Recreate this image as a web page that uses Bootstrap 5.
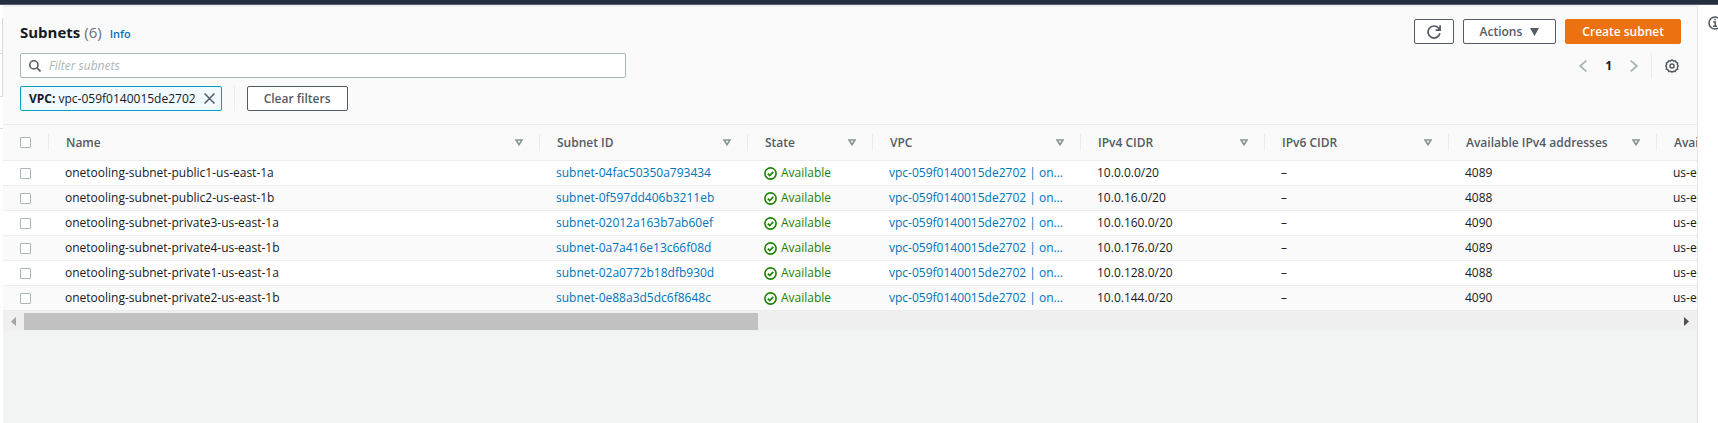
<!DOCTYPE html>
<html lang="en">
<head>
<meta charset="utf-8">
<meta name="viewport" content="width=device-width, initial-scale=1">
<title>Subnets | VPC Console</title>
<link href="https://cdn.jsdelivr.net/npm/bootstrap@5.3.0/dist/css/bootstrap.min.css" rel="stylesheet">
<style>
  body { font-family: "Open Sans", sans-serif; font-size: 12px; line-height: 16px; color: #16191f; background: #f2f3f3; }
  a { color: #0073bb; text-decoration: none; }
  .topbar { height: 5px; background: #232f3e; border-bottom: 1px solid #545b64; }
  .nav-edge { width: 3px; background: #fff; }
  .nav-edge div { border-right: 1px solid #d5dbdb; border-bottom: 1px solid #d5dbdb; }
  .edge-a { height: 36px; margin-top: 13px; }
  .edge-b { height: 43px; }
  .edge-c { height: 32px; border-right: 0 !important; }
  .panel { min-width: 0; border-right: 1px solid #e3e6e6; border-top: 1px solid #eaeded; margin-top: 1px; }
  .tools { background: #fafafa; }
  .panel-head { padding: 12px 16px 13px 17px; border-bottom: 1px solid #eaeded; }
  .info-rail { width: 20px; background: #fff; padding: 9px 0 0 10px; overflow: hidden; }
  .title-row { height: 25px; }
  .search-row { margin-top: 9px; }
  .btn-row { gap: 9px; }
  h1 { font-size: 15px; line-height: 24px; }
  .count { color: #687078; font-weight: 400; }
  .info-link { font-size: 11px; font-weight: 600; }
  .console-btn { height: 25px; padding: 0 16px; font-size: 12px; line-height: 16px; font-weight: 600; color: #545b64; background: #fff; border: 1px solid #545b64; border-radius: 2px; }
  .console-btn.icon-only { padding: 0 12px; }
  .console-btn.primary { color: #fff; background: #ec7211; border-color: #ec7211; }
  .search-box { max-width: 606px; height: 25px; border: 1px solid #aab7b8; border-radius: 2px; background: #fff; padding: 0 8px; }
  .search-box input { font-size: 12px; line-height: 16px; color: #16191f; }
  .search-box input::placeholder { color: #aab7b8; font-style: italic; opacity: 1; }
  .token { height: 25px; padding: 0 6px 0 8px; border: 1px solid #00a1c9; border-radius: 2px; background: #f1faff; }
  .bare { border: 0; background: none; padding: 0; display: flex; }
  .sep { width: 1px; height: 25px; background: #eaeded; }
  .filters { gap: 12px; }
  .pager { gap: 13px; padding-right: 2px; }
  .pages { gap: 18px; }
  .table-view { overflow: hidden; }
  .subnet-table { table-layout: fixed; width: 1760px; border-collapse: separate; border-spacing: 0; }
  .subnet-table th, .subnet-table td { border-bottom: 1px solid #eaeded; white-space: nowrap; overflow: hidden; }
  .subnet-table th { height: 36px; padding: 0; background: #fafafa; color: #545b64; font-weight: 600; }
  .subnet-table td { height: 25px; padding: 0 0 0 16px; background: #fff; }
  .subnet-table tr:nth-child(even) td { background: #fafafa; }
  .subnet-table .pick { padding: 0 0 0 17px; }
  .head-cell { height: 17px; padding: 0 16px 0 17px; }
  .divided { border-right: 1px solid #eaeded; }
  .w-pick { width: 46px; } .w-name { width: 491px; } .w-m { width: 208px; } .w-s { width: 125px; } .w-c { width: 184px; }
  .form-check-input { width: 11px; height: 11px; margin: 0; border: 1px solid #aab7b8; display: block; }
  .form-check-input[type=checkbox] { border-radius: 1px; }
  .ok { color: #1d8102; }
  .scroll-track { height: 20px; background: #f0f0f0; padding: 0 8px; }
  .scroll-thumb { width: 734px; height: 17px; background: #c1c1c1; }
</style>
</head>
<body class="d-flex flex-column min-vh-100">
<svg width="0" height="0" class="position-absolute" aria-hidden="true">
  <symbol id="okay" viewBox="0 0 13 13"><circle cx="6.500" cy="6.500" r="5.600" fill="none" stroke="#1d8102" stroke-width="1.600"/><path d="M3.800 6.600l1.900 1.900 3.600-3.600" fill="none" stroke="#1d8102" stroke-width="1.600"/></symbol>
  <symbol id="filter" viewBox="0 0 8 7"><path d="M1 1h6L4 5.600z" fill="none" stroke="#879596" stroke-width="1.700"/></symbol>
</svg>
<header class="topbar"></header>
<div class="d-flex flex-grow-1">
  <div class="nav-edge flex-shrink-0"><div class="edge-a"></div><div class="edge-b"></div><div class="edge-c"></div></div>
  <main class="panel flex-grow-1">
    <div class="tools panel-head d-flex flex-column">
      <div class="title-row d-flex align-items-center justify-content-between">
        <div class="d-flex align-items-baseline gap-2">
          <h1 class="m-0 fw-bold">Subnets <span class="count">(6)</span></h1>
          <a href="#" class="info-link">Info</a>
        </div>
        <div class="btn-row d-flex">
          <button class="console-btn icon-only d-flex align-items-center" type="button" aria-label="Refresh"><svg width="14" height="14" viewBox="0 0 14 14" fill="none" stroke="#545b64" stroke-width="1.700"><path d="M12.900 8.300A6 6 0 1 1 11.500 3L13 5M13.100 .3v4.900H8.600"/></svg></button>
          <button class="console-btn d-flex align-items-center gap-2" type="button">Actions <svg width="9" height="8" viewBox="0 0 9 8"><path d="M0 0h9L4.500 8z" fill="#545b64"/></svg></button>
          <button class="console-btn primary" type="button">Create subnet</button>
        </div>
      </div>
      <div class="search-row d-flex align-items-center justify-content-between">
        <div class="search-box flex-grow-1 d-flex align-items-center gap-2">
          <svg width="12" height="12" viewBox="0 0 12 12" fill="none" stroke="#545b64" stroke-width="1.600"><circle cx="4.900" cy="4.900" r="4.100"/><path d="M7.800 7.800l3.700 3.700"/></svg>
          <input class="border-0 bg-transparent p-0 flex-grow-1" type="text" placeholder="Filter subnets" aria-label="Filter subnets">
        </div>
        <div class="pager d-flex align-items-center">
          <div class="pages d-flex align-items-center">
            <button class="bare" type="button" aria-label="Previous page"><svg width="8" height="12" viewBox="0 0 8 12" fill="none" stroke="#aab7b8" stroke-width="1.800"><path d="M7.300 .6L1.200 6l6.100 5.400"/></svg></button>
            <b>1</b>
            <button class="bare" type="button" aria-label="Next page"><svg width="8" height="12" viewBox="0 0 8 12" fill="none" stroke="#aab7b8" stroke-width="1.800"><path d="M.7 .6L6.800 6 .7 11.400"/></svg></button>
          </div>
          <span class="sep"></span>
          <button class="bare" type="button" aria-label="Preferences"><svg width="14" height="14" viewBox="0 0 14 14" fill="none" stroke="#545b64" stroke-width="1.500"><path d="M5.600 1.900L7 .9l1.400 1 1.800-.2.800 1.500 1.600.8-.2 1.700L13.200 7l-.8 1.400.2 1.700-1.600.8-.8 1.500-1.800-.2L7 13.100l-1.400-.9-1.800.2-.8-1.500-1.600-.8.200-1.700L.8 7l.8-1.300L1.400 4 3 3.200l.8-1.500z"/><circle cx="7" cy="7" r="2"/></svg></button>
        </div>
      </div>
      <div class="filters d-flex align-items-center mt-2">
        <span class="token d-flex align-items-center gap-2"><span><b>VPC:</b> vpc-059f0140015de2702</span><button class="bare" type="button" aria-label="Remove filter"><svg width="11" height="11" viewBox="0 0 12 12" stroke="#545b64" stroke-width="1.700"><path d="M.6.600l10.800 10.800M11.400.6L.6 11.400"/></svg></button></span>
        <span class="sep"></span>
        <button class="console-btn" type="button">Clear filters</button>
      </div>
    </div>
    <div class="table-view">
      <table class="subnet-table" id="subnets">
        <colgroup><col class="w-pick"><col class="w-name"><col class="w-m"><col class="w-s"><col class="w-m"><col class="w-c"><col class="w-c"><col class="w-m"><col></colgroup>
        <thead><tr><th><div class="head-cell d-flex align-items-center divided"><input class="form-check-input" type="checkbox" aria-label="Select all subnets"></div></th></tr></thead>
        <tbody></tbody>
      </table>
    </div>
    <div class="scroll-track d-flex align-items-center justify-content-between">
      <div class="d-flex align-items-center gap-2"><svg width="5" height="9" viewBox="0 0 5 9"><path d="M5 0v9L0 4.500z" fill="#a3a3a3"/></svg><div class="scroll-thumb"></div></div>
      <svg width="5" height="9" viewBox="0 0 5 9"><path d="M0 0v9l5-4.500z" fill="#505050"/></svg>
    </div>
  </main>
  <aside class="info-rail flex-shrink-0"><svg width="14" height="14" viewBox="0 0 14 14"><circle cx="7" cy="7" r="6" fill="none" stroke="#545b64" stroke-width="1.600"/><path d="M5.200 6h2v4M5 10.200h4M6.200 3.600h1.600" fill="none" stroke="#545b64" stroke-width="1.500"/></svg></aside>
</div>
<script src="https://cdn.jsdelivr.net/npm/bootstrap@5.3.0/dist/js/bootstrap.bundle.min.js"></script>
<script>
  const columns = ['Name', 'Subnet ID', 'State', 'VPC', 'IPv4 CIDR', 'IPv6 CIDR', 'Available IPv4 addresses', 'Availability Zone'];
  const subnets = [
    ['public1', '1a', '04fac50350a793434', '0', 4089],
    ['public2', '1b', '0f597dd406b3211eb', '16', 4088],
    ['private3', '1a', '02012a163b7ab60ef', '160', 4090],
    ['private4', '1b', '0a7a416e13c66f08d', '176', 4089],
    ['private1', '1a', '02a0772b18dfb930d', '128', 4088],
    ['private2', '1b', '0e88a3d5dc6f8648c', '144', 4090]
  ];
  const table = document.getElementById('subnets');
  table.tHead.rows[0].insertAdjacentHTML('beforeend', columns.map(c =>
    `<th scope="col"><div class="head-cell d-flex align-items-center justify-content-between divided">${c}<svg width="8" height="7"><use href="#filter"/></svg></div></th>`).join(''));
  table.tBodies[0].innerHTML = subnets.map(([name, zone, id, net, free]) => `<tr>
    <td class="pick"><input class="form-check-input" type="checkbox" aria-label="Select ${name}"></td>
    <td>onetooling-subnet-${name}-us-east-${zone}</td>
    <td><a href="#">subnet-${id}</a></td>
    <td class="ok"><div class="d-flex align-items-center gap-1"><svg width="13" height="13"><use href="#okay"/></svg>Available</div></td>
    <td><a href="#">vpc-059f0140015de2702 | on…</a></td>
    <td>10.0.${net}.0/20</td><td>–</td><td>${free}</td><td>us-east-${zone}</td></tr>`).join('');
</script>
</body>
</html>
